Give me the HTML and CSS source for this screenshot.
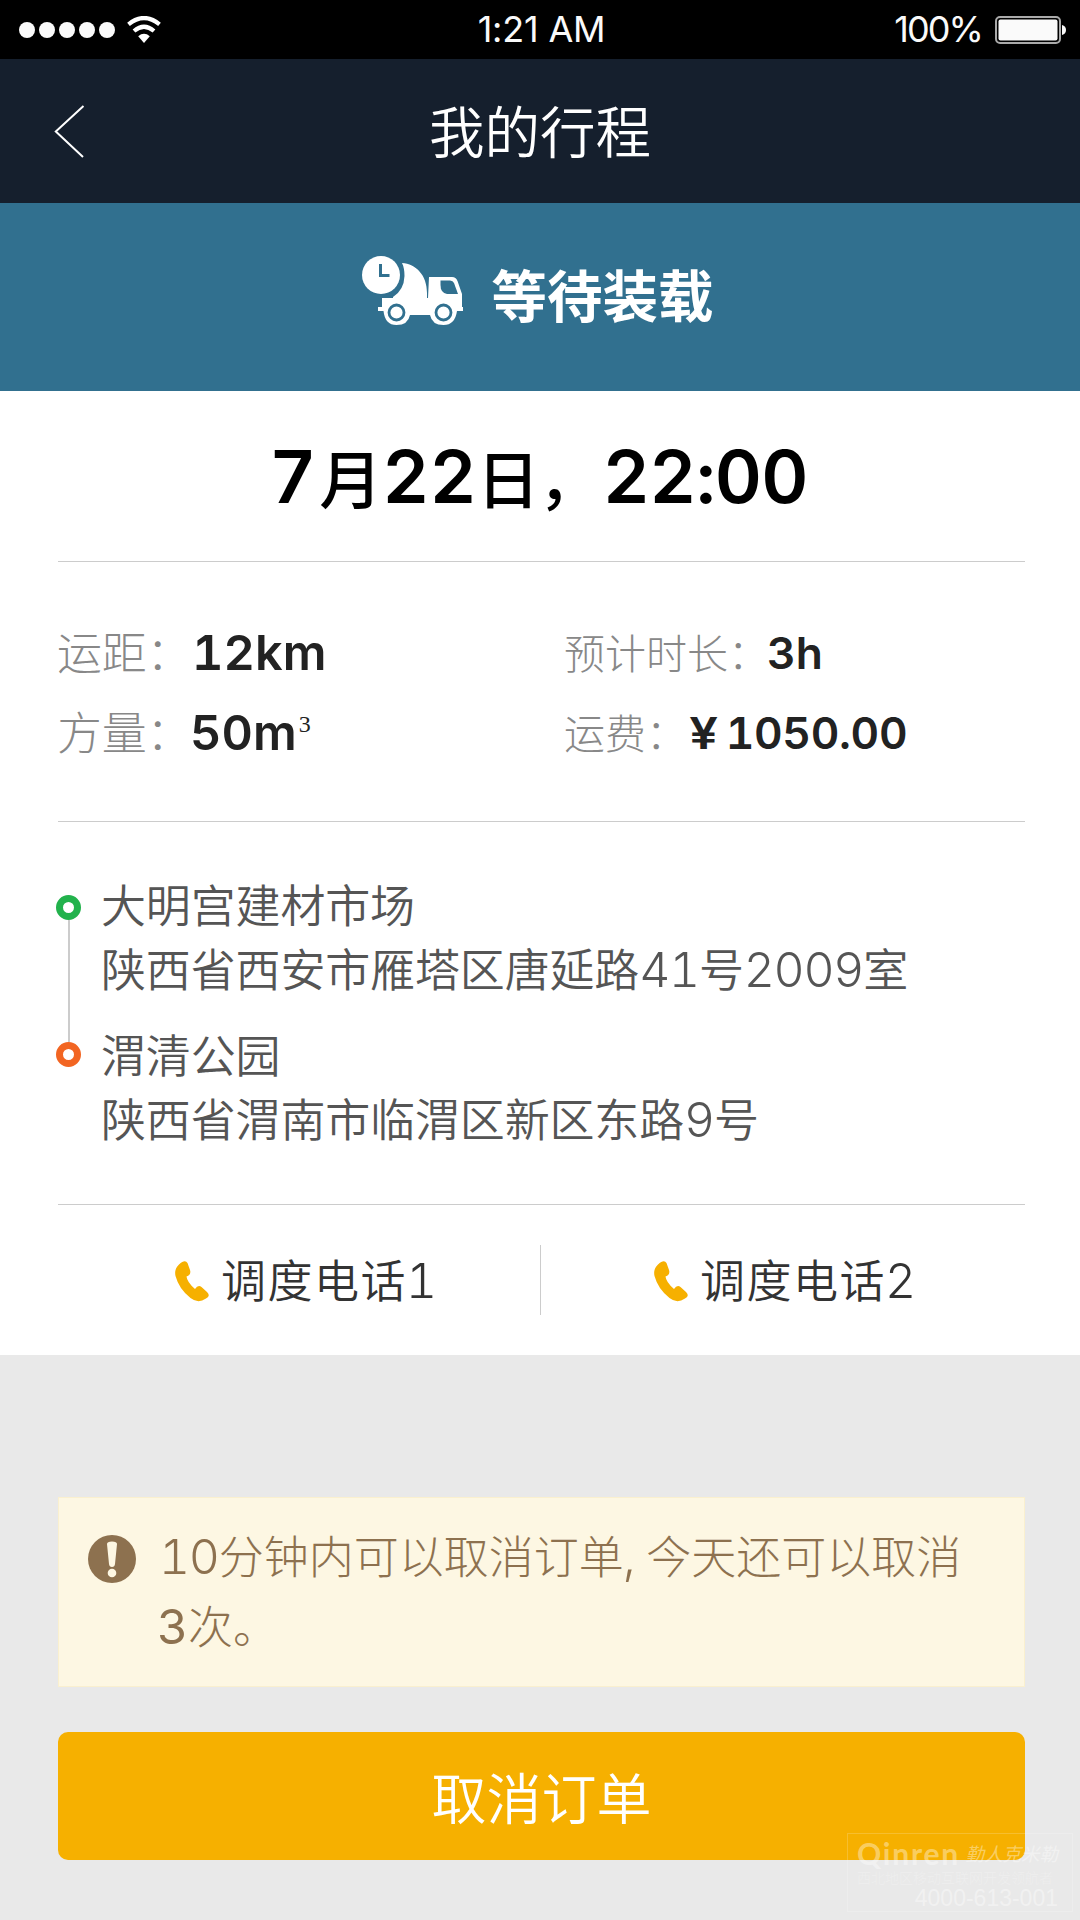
FILE: index.html
```html
<!DOCTYPE html>
<html lang="zh-CN">
<head>
<meta charset="UTF-8">
<title>我的行程</title>
<link rel="stylesheet" href="styles.css">
</head>
<body>
<div class="screen">
  <div class="status-bar">
    <div class="signal">
      <i class="dot"></i><i class="dot"></i><i class="dot"></i><i class="dot"></i><i class="dot"></i>
      <svg class="wifi" width="34" height="27" viewBox="0 0 34 27" fill="none" stroke="#fff" stroke-width="4.2">
        <path d="M1.500 8.300Q17-4.300 32.500 8.300M7 15Q17 6.600 27 15"/>
        <path d="M17 27L11.200 20.200Q17 15.400 22.800 20.200Z" fill="#fff" stroke="none"/>
      </svg>
    </div>
    <div class="clock">1:21 AM</div>
    <div class="power">
      <span class="percent">100%</span>
      <svg width="71" height="28" viewBox="0 0 71 28">
        <rect x="1" y="1" width="64" height="26" rx="4" fill="none" stroke="#aaa" stroke-width="2"/>
        <rect x="3.500" y="3.500" width="59" height="21" rx="2" fill="#fafafa"/>
        <path d="M67 9Q71 10 71 14T67 19Z" fill="#fafafa"/>
      </svg>
    </div>
  </div>

  <header class="nav">
    <svg class="back" width="31" height="53" viewBox="0 0 31 53" fill="none" stroke="#fff" stroke-width="2"><path d="M29.500 1L1.800 26.500L29 52"/></svg>
    <h1 class="nav-title">我的行程</h1>
  </header>

  <section class="state">
    <svg class="truck" width="102" height="70" viewBox="0 0 102 70">
      <g fill="#fff">
        <path d="M40 7C54 8 65 19 65 37V43H31V41Q42 34 42.500 20Q42.500 12 40 7Z"/>
        <path d="M67 21H90Q94 21 95.500 25L100 38V51H101V55H95Q93 69 81.500 69T68 59H48Q46 69 34.500 69T21.500 55H16V51H20V42H66Z"/>
        <circle cx="19" cy="19" r="19"/>
      </g>
      <path d="M78.500 24.500H88Q91 24.500 92 27L96 38H85Q78.500 37 78.500 29Z" fill="#31708f"/>
      <g fill="none" stroke="#31708f" stroke-width="2.800">
        <circle cx="34.500" cy="56.500" r="7.500"/><circle cx="81.500" cy="56.500" r="7.500"/>
        <path d="M18.500 8V19.500H27.500" stroke-width="3"/>
      </g>
    </svg>
    <strong class="state-text">等待装载</strong>
  </section>

  <main class="trip">
    <div class="date"><b class="month">7</b>月<b>22</b>日<span class="date-comma">，</span><b class="time">22:00</b></div>

    <div class="facts">
      <dl class="fact-col wide">
        <div class="fact"><dt>运距：</dt><dd>12km</dd></div>
        <div class="fact"><dt>方量：</dt><dd class="volume">50m<sup>3</sup></dd></div>
      </dl>
      <dl class="fact-col">
        <div class="fact"><dt>预计时长：</dt><dd class="hours">3h</dd></div>
        <div class="fact"><dt>运费：</dt><dd class="price"><span class="yen">¥</span>1050.00</dd></div>
      </dl>
    </div>

    <div class="route">
      <div class="track"><i class="stop start"></i><i class="line"></i><i class="stop end"></i></div>
      <div class="places">
        <div class="place">
          <p>大明宫建材市场</p>
          <p>陕西省西安市雁塔区唐延路<b>41</b>号<b>2009</b>室</p>
        </div>
        <div class="place">
          <p>渭清公园</p>
          <p>陕西省渭南市临渭区新区东路<b>9</b>号</p>
        </div>
      </div>
    </div>

    <div class="calls">
      <a class="call">
        <svg width="34" height="41" viewBox="0 0 34 41"><path d="M4 3.500Q10-2 12.500 2L15 9Q16.500 14 11.500 15.500Q12 21 20 28Q23 23.500 26.500 26L32 31Q36 35 31 37.500Q23 43 15.500 37Q4 28 .5 15Q-1 8 4 3.500Z" fill="#f6b000"/></svg>
        <span>调度电话<b>1</b></span>
      </a>
      <a class="call second">
        <svg width="34" height="41" viewBox="0 0 34 41"><path d="M4 3.500Q10-2 12.500 2L15 9Q16.500 14 11.500 15.500Q12 21 20 28Q23 23.500 26.500 26L32 31Q36 35 31 37.500Q23 43 15.500 37Q4 28 .5 15Q-1 8 4 3.500Z" fill="#f6b000"/></svg>
        <span>调度电话<b>2</b></span>
      </a>
    </div>
  </main>

  <div class="notice">
    <svg width="48" height="48" viewBox="0 0 48 48"><circle cx="24" cy="24" r="24" fill="#8d714f"/><path d="M19 9Q19 6.500 24 6.500T29 9L27 29Q26.700 32 24 32T21 29Z" fill="#fdf7e3"/><circle cx="24" cy="38" r="4.300" fill="#fdf7e3"/></svg>
    <p><b>10</b>分钟内可以取消订单<b class="comma">,</b>今天还可以取消<br><b class="times">3</b>次。</p>
  </div>

  <button class="cancel">取消订单</button>

  <div class="watermark">
    <div class="wm-brand"><span class="wm-latin">Qinren</span><span class="wm-han">勤人克米勒</span></div>
    <div class="wm-line">西北地区移动互联网开发领航者</div>
    <div class="wm-phone">4000-613-001</div>
  </div>
</div>
</body>
</html>
```
FILE: styles.css
```css
* { box-sizing: border-box; margin: 0; padding: 0; }

body {
  font-family: "Noto Sans CJK SC", sans-serif;
  font-weight: 300;
  background: #e9e9e9;
}

b {
  font-family: "Inter", sans-serif;
  font-feature-settings: "tnum";
  font-weight: 300;
  font-size: 1.07em;
  line-height: 1;
  letter-spacing: -1.300px;
}
svg { display: block; flex: none; }

.screen { position: relative; width: 1080px; height: 1920px; overflow: hidden; background: #e9e9e9; }

.status-bar {
  display: grid;
  grid-template-columns: 1fr auto 1fr;
  align-items: center;
  height: 59px;
  padding: 0 14px 0 19px;
  background: #000;
  color: #fafafa;
  font: 400 36px/57px "Inter", sans-serif;
}
.signal { display: flex; align-items: center; gap: 4px; }
.dot { width: 16px; height: 16px; border-radius: 50%; background: #fafafa; }
.wifi { margin-left: 8px; }
.clock { margin-right: 2px; letter-spacing: -0.200px; }
.power { display: flex; align-items: center; justify-content: flex-end; gap: 13px; }
.percent { letter-spacing: -1.900px; }

.nav {
  display: grid;
  grid-template-columns: 1fr auto 1fr;
  align-items: center;
  height: 144px;
  padding: 0 54px;
  background: #151f2d;
  color: #fff;
}
.nav-title { grid-column: 2; padding-bottom: 4px; font-size: 55.500px; line-height: 80px; font-weight: 350; }

.state {
  display: flex;
  align-items: center;
  justify-content: center;
  gap: 27px;
  height: 188px;
  padding: 0 4px 13px 0;
  background: #31708f;
  color: #fff;
}
.state-text { padding-top: 4px; font-size: 55.500px; line-height: 80px; font-weight: 700; }

.trip { height: 964px; padding: 0 55px 0 58px; background: #fff; }

.date {
  height: 171px;
  padding-right: 6px;
  border-bottom: 1px solid #ccc;
  color: #000;
  font-size: 63px;
  line-height: 170px;
  font-weight: 500;
  text-align: center;
}
.date b { font-size: 73px; font-weight: 600; letter-spacing: 0; }
.date .month { letter-spacing: 3px; }
.date .time { letter-spacing: -0.700px; }
.date-comma { display: inline-block; width: 63px; text-indent: -3px; }

.facts { display: flex; height: 260px; padding-top: 49px; border-bottom: 1px solid #ccc; }
.fact-col { font-size: 41px; }
.fact-col.wide { width: 507px; margin-left: -1px; font-size: 45px; }
.wide .fact dt { letter-spacing: -0.300px; }
.wide .fact dd { padding-left: 1px; }
.fact { display: flex; align-items: baseline; height: 80px; line-height: 80px; }
.fact dt { color: #888; }
.fact dd { color: #222; font-family: "Inter", sans-serif; font-weight: 600; font-size: 1.08em; font-feature-settings: "tnum"; }
.fact sup { font: 400 24px/1 "Liberation Serif", serif; vertical-align: 18px; margin-left: 2px; }
.volume { margin-left: -2px; }
.hours { margin-left: -2px; }
.price { padding-left: 4px; letter-spacing: -0.300px; }
.yen { display: inline-block; margin-right: 10px; transform: scaleX(1.15); }

.route { display: flex; height: 383px; border-bottom: 1px solid #ccc; color: #555; }
.track { display: flex; flex-direction: column; align-items: center; width: 23px; margin-left: -1px; padding-top: 73px; }
.stop { width: 25px; height: 25px; border: 7px solid #22b24c; border-radius: 50%; }
.stop.end { border-color: #f26522; }
.line { width: 2px; height: 122px; background: #ccc; }
.places { padding: 50px 0 0 21px; font-size: 45px; line-height: 64px; font-weight: 350; white-space: nowrap; }
.place { height: 150px; }
.place p { letter-spacing: -0.150px; }

.calls { display: flex; align-items: center; height: 150px; color: #333; font-size: 45px; font-weight: 350; letter-spacing: 1.500px; }
.call { display: flex; align-items: center; gap: 12px; width: 482px; height: 70px; padding-left: 117px; }
.call.second { border-left: 1px solid #ccc; padding-left: 113px; }
.call svg { margin-top: 2px; }
.call span { padding-bottom: 4px; }
.call b { font-weight: 350; margin-left: -1px; }

.notice {
  display: flex;
  gap: 23px;
  width: 967px;
  height: 190px;
  margin: 142px 0 0 58px;
  padding: 37px 0 0 29px;
  border: 1px solid #faf0cf;
  background: #fdf7e3;
  color: #8d714f;
  font-size: 45px;
  line-height: 70px;
  white-space: nowrap;
}
.notice p { margin-top: -15px; }
.comma { margin: 0 12px 0 -1px; }
.times { font-weight: 400; margin: 0 1px 0 -2px; }

.cancel {
  display: block;
  width: 967px;
  height: 128px;
  margin: 45px 0 0 58px;
  padding-bottom: 2px;
  border: 0;
  border-radius: 10px;
  background: #f6b000;
  color: #fff;
  font: 350 55px/126px "Noto Sans CJK SC", sans-serif;
}

.watermark {
  position: absolute;
  left: 847px;
  top: 1833px;
  width: 226px;
  height: 79px;
  padding: 3px 14px 0 9px;
  border: 1px solid rgba(255, 255, 255, .18);
  color: rgba(255, 255, 255, .4);
  white-space: nowrap;
}
.wm-brand { display: flex; align-items: center; justify-content: space-between; height: 31px; }
.wm-latin { font: 700 30px/30px "Lato", sans-serif; letter-spacing: 1.800px; }
.wm-han { font-size: 18.500px; font-style: italic; font-weight: 400; line-height: 20px; }
.wm-line { color: rgba(255, 255, 255, .25); font-size: 14px; line-height: 18px; }
.wm-phone { font: 400 23px/24px "Liberation Sans", sans-serif; text-align: right; }
```
